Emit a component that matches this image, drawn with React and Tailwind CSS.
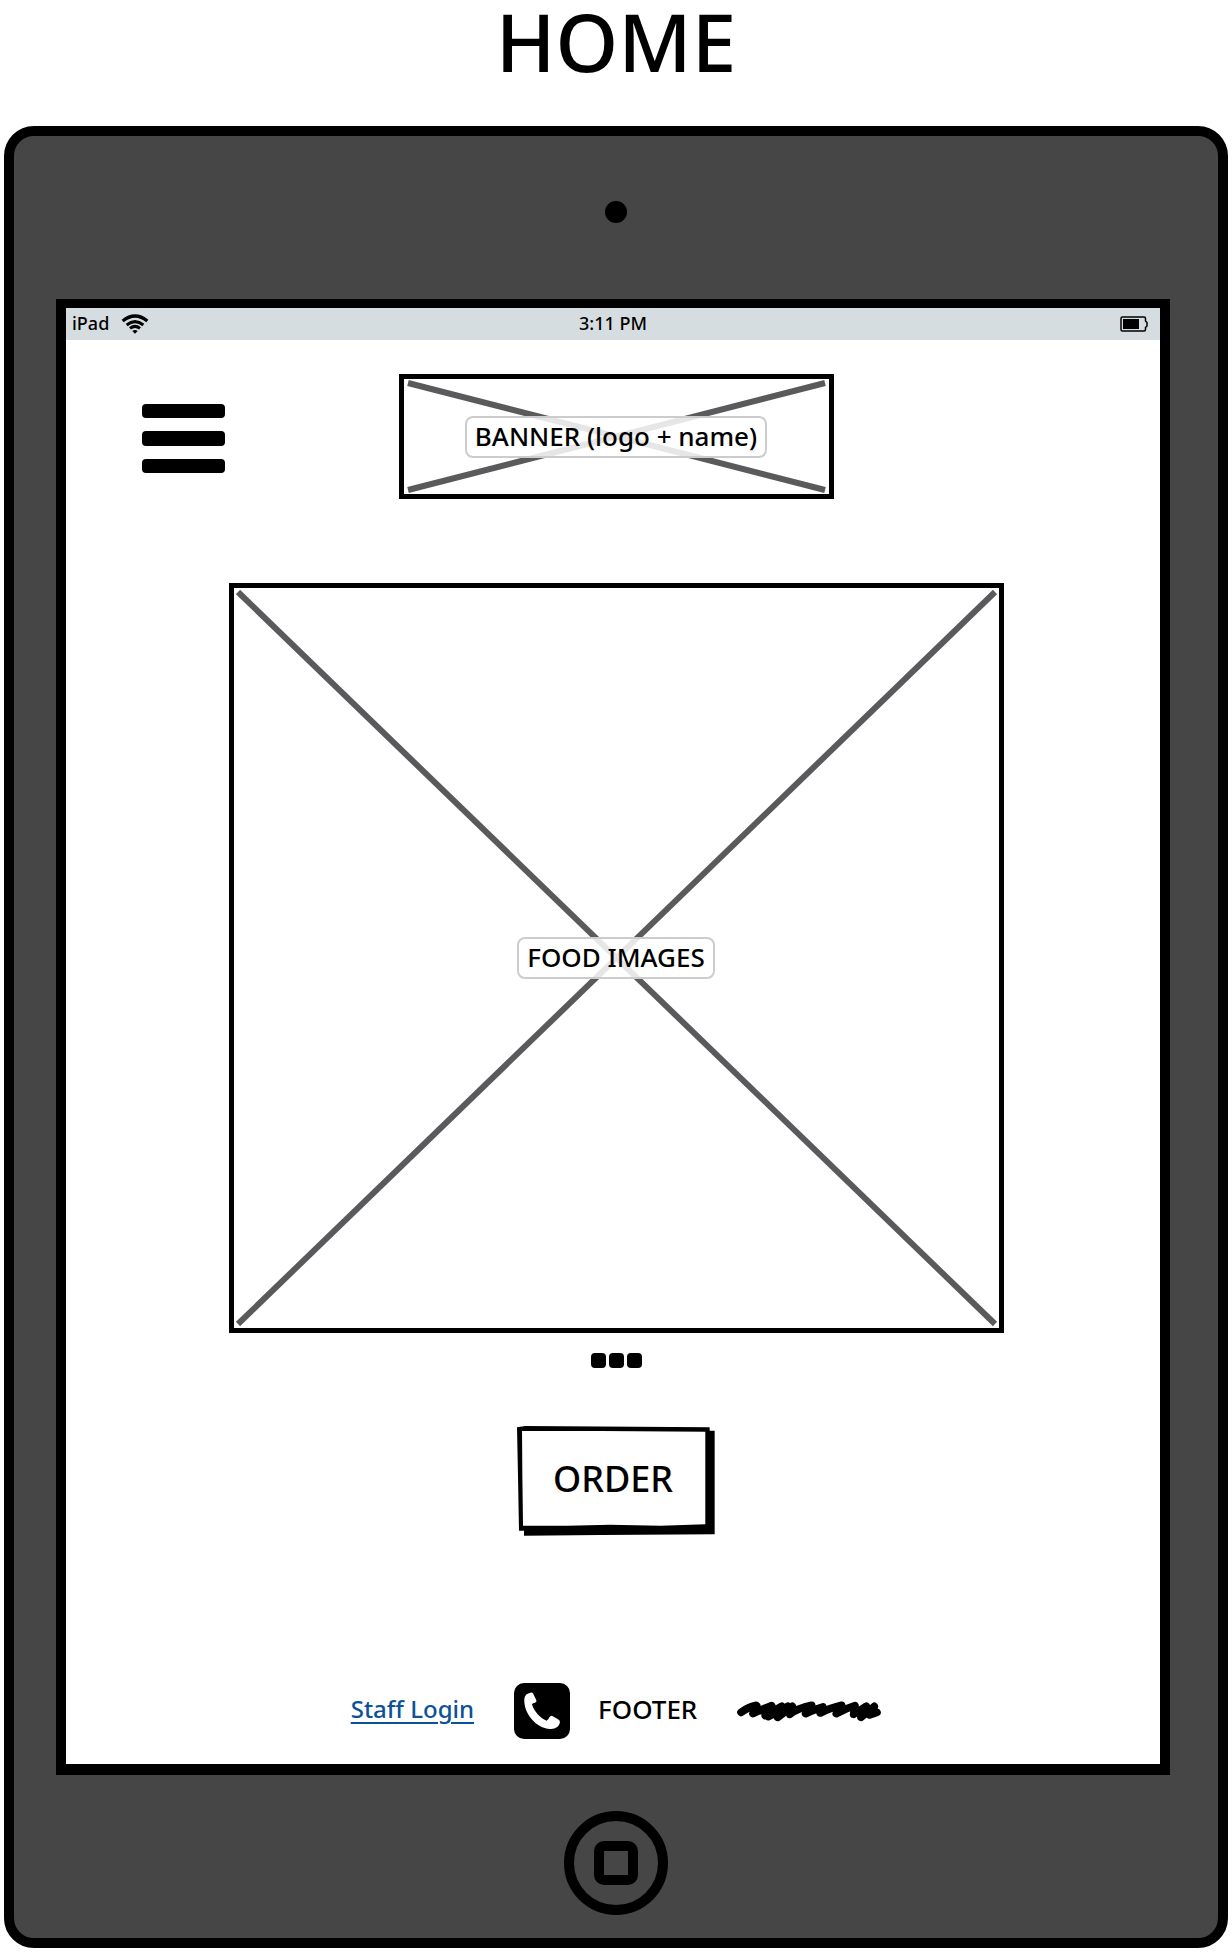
function WifiIcon() {
  return (
    <svg viewBox="360 612 84 60" className="h-5 w-7" fill="none" stroke="black" aria-hidden="true">
      <path d="M365 633Q402 603 439 633" strokeWidth="10" />
      <path d="M377 645Q402 625 427 645" strokeWidth="9" />
      <path d="M387 655Q402 643 417 655" strokeWidth="9" />
      <path d="M394 663Q402 657 410 663L402 671Z" fill="black" stroke="none" />
    </svg>
  );
}

function BatteryIcon() {
  return (
    <svg viewBox="0 0 28 16" className="h-4 w-7" aria-label="Battery" role="img">
      <path
        d="M2.5 1H24Q25.5 1 25.5 2.5V5L27 6.5V10L25.5 11.5V13.5Q25.5 15 24 15H2.5Q1 15 1 13.5V2.5Q1 1 2.5 1Z"
        fill="none"
        stroke="black"
        strokeWidth="1.5"
      />
      <rect x="3" y="3" width="16" height="10" />
    </svg>
  );
}

function MenuIcon() {
  return (
    <svg viewBox="0 0 84 69" className="h-[69px] w-[84px]" aria-hidden="true">
      <rect width="83" x="1" height="14" rx="4" />
      <rect width="83" x="1" y="27" height="15" rx="4" />
      <rect width="83" x="1" y="55" height="14" rx="4" />
    </svg>
  );
}

function PhoneIcon() {
  return (
    <svg viewBox="550 69 168 168" className="size-14" aria-hidden="true">
      <rect x="550" y="69" width="168" height="168" rx="30" />
      <path
        d="M600 98Q583 100 581 116C578 160 616 204 658 207Q684 208 688 187Q688 181 682 178L665 168Q660 166 656 172Q653 180 648 182C628 175 609 152 604 133Q606 128 613 128Q619 126 617 121L608 102Q605 97 600 98Z"
        fill="white"
      />
    </svg>
  );
}

function Scribble() {
  return (
    <svg viewBox="468 120 432 60" className="h-5 w-36 overflow-visible" role="img" aria-label="Scribbled text">
      <path
        d="M480 154Q505 136 526 133Q532 136 516 158Q540 146 572 134L553 164L602 136L562 167L620 136L590 169L634 136Q622 150 626 160Q650 142 692 133Q690 140 674 158Q705 144 726 138Q722 148 718 156Q745 142 782 133Q775 145 766 158Q795 142 822 134L818 160L856 136L840 169L880 136L866 162L888 154M550 152L630 150M820 150L880 148"
        fill="none"
        stroke="black"
        strokeWidth="23"
        strokeLinecap="round"
        strokeLinejoin="round"
      />
    </svg>
  );
}

function ImagePlaceholder({ label, className }) {
  return (
    <figure className={`relative flex max-w-full items-center justify-center border-5 border-black ${className}`}>
      <svg className="absolute inset-1 h-[calc(100%-8px)] w-[calc(100%-8px)] overflow-visible" stroke="#5a5a5c" strokeWidth="6" aria-hidden="true">
        <line x1="0" y1="0" x2="100%" y2="100%" />
        <line x1="100%" y1="0" x2="0" y2="100%" />
      </svg>
      <figcaption className="relative rounded-lg border-2 border-[#cccccc] bg-white/85 px-2 pb-0.5 leading-9 whitespace-nowrap">
        {label}
      </figcaption>
    </figure>
  );
}

export default function App() {
  return (
    <div className="bg-white px-1 pb-1 font-['Noto_Sans',sans-serif] text-[26px] font-medium text-black">
      <h1 className="pb-11 text-center text-[80px] leading-[82px]">HOME</h1>

      <div className="rounded-[30px] border-10 border-black bg-[#464646]">
        <div className="flex h-[163px] items-center justify-center pb-3">
          <span className="size-[22px] rounded-full bg-black" />
        </div>

        <div className="mr-12 ml-[42px] border-x-10 border-t-9 border-b-11 border-black bg-white">
          <div className="grid h-8 grid-cols-[1fr_auto_1fr] items-center bg-[#d6dde0] pr-3 pl-1.5 text-[18px] leading-6">
            <div className="flex items-center gap-3">
              <span className="pb-0.5">iPad</span>
              <WifiIcon />
            </div>
            <span className="pb-0.5 pl-1.5">3:11 PM</span>
            <div className="flex justify-end">
              <BatteryIcon />
            </div>
          </div>

          <main className="flex flex-col items-center pt-[34px] pb-[25px] pl-1.5">
            <header className="grid w-full grid-cols-[1fr_auto_1fr] items-center">
              <button type="button" aria-label="Menu" className="ml-[69px] w-fit pt-1">
                <MenuIcon />
              </button>
              <ImagePlaceholder label="BANNER (logo + name)" className="h-[125px] w-[435px]" />
            </header>

            <ImagePlaceholder label="FOOD IMAGES" className="mt-[84px] h-[750px] w-[775px]" />

            <div className="mt-5 flex gap-[3px]">
              <span className="size-[15px] rounded bg-black" />
              <span className="size-[15px] rounded bg-black" />
              <span className="size-[15px] rounded bg-black" />
            </div>

            <button type="button" className="relative mt-[58px] flex h-[110px] w-[198px] items-center justify-center pr-1.5 pb-1 text-[36px]">
              <svg viewBox="51 349 592 330" preserveAspectRatio="none" className="absolute inset-0 size-full" aria-hidden="true">
                <path d="M51 353L76 349L627 353V363H642V674L300 676L72 678V663H57L54 500Z" />
                <path d="M66 364L300 364L614 366V644L480 648L330 645L200 648H69L67 500Z" fill="white" />
              </svg>
              <span className="relative">ORDER</span>
            </button>

            <footer className="mt-[147px] flex items-center">
              <a href="#staff-login" className="pb-1 text-[24px] text-[#0b5299] underline decoration-2 underline-offset-4">
                Staff Login
              </a>
              <a href="#call" aria-label="Call us" className="ml-10">
                <PhoneIcon />
              </a>
              <span className="mr-10 ml-7 pb-1">FOOTER</span>
              <Scribble />
            </footer>
          </main>
        </div>

        <div className="flex h-[163px] items-center justify-center pt-3">
          <button type="button" aria-label="Home" className="flex size-[104px] items-center justify-center rounded-full border-10 border-black">
            <span className="size-11 rounded-[10px] border-10 border-black" />
          </button>
        </div>
      </div>
    </div>
  );
}
